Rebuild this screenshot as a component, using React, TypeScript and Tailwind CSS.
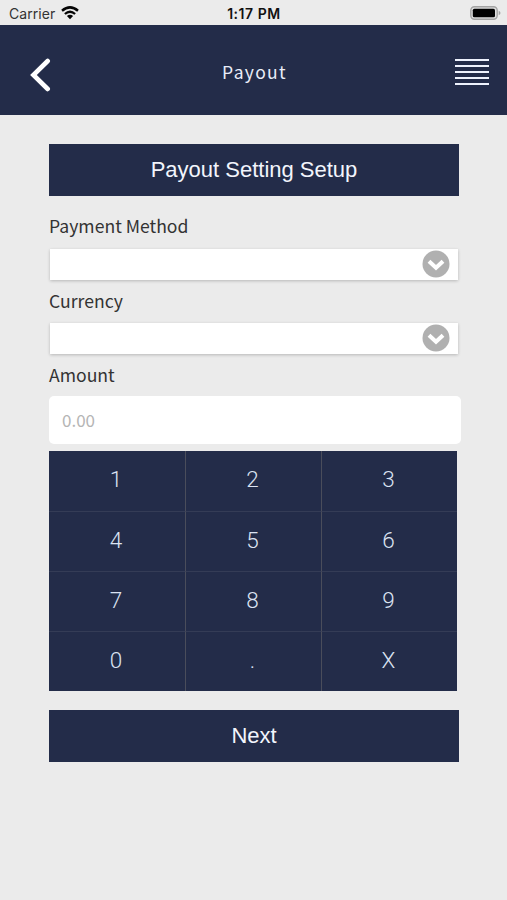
const CJK = "font-['Noto_Sans_CJK_SC','Noto_Sans',sans-serif]";
const KEYS = ["1", "2", "3", "4", "5", "6", "7", "8", "9", "0", ".", "X"];

function StatusBar() {
  return (
    <div className="grid h-[25px] grid-cols-3 items-center pl-[9px] pr-[6px] font-[Inter,sans-serif] text-[#111]">
      <div className="flex items-center gap-[6px] pt-[2px]">
        <span className="text-[14px] leading-[20px] tracking-[0.05px] text-[#333]">Carrier</span>
        <svg className="-mt-[2px]" width="18" height="14" viewBox="0 0 18 14" fill="none" stroke="#050505">
          <path d="M1 4.8 Q9 -2 17 4.8" strokeWidth="2.5" />
          <path d="M3.9 8 Q9 3.6 14.1 8" strokeWidth="2.3" />
          <path d="M5.9 10.1 Q9 7.5 12.1 10.1 L9 13.3 Z" fill="#050505" stroke="none" />
        </svg>
      </div>
      <div className="whitespace-nowrap pr-[2px] pt-[2px] text-center text-[14px] font-semibold leading-[20px] tracking-[0.55px]">1:17 PM</div>
      <div className="flex justify-end pt-[1px]">
        <svg width="31" height="14" viewBox="0 0 31 14">
          <rect x=".8" y=".8" width="26.4" height="12.4" rx="3.6" fill="#dedede" stroke="#a3a3a3" strokeWidth="1.4" />
          <rect x="2.8" y="2.7" width="22.2" height="8.6" rx="1.6" fill="#000" />
          <path d="M28.7 4.8 Q30.5 5.6 30.5 7 Q30.5 8.4 28.7 9.2Z" fill="#a3a3a3" />
        </svg>
      </div>
    </div>
  );
}

function Header() {
  return (
    <header className="flex h-[90px] items-center justify-between bg-[#232c49] pl-[30px] pr-[18px]">
      <button className="mt-[9px] w-[34px]" aria-label="Back">
        <svg width="22" height="34" viewBox="0 0 22 34" fill="none" stroke="#fff" strokeWidth="4.6" strokeLinecap="round" strokeLinejoin="miter">
          <path d="M17.7 3 L3.4 17 L17.7 31" />
        </svg>
      </button>
      <h1 className={`${CJK} mt-[3px] pr-[10px] text-[17.5px] leading-[26px] tracking-[1.3px] text-[#e9edf8]`}>Payout</h1>
      <button className="mt-[4px] flex w-[34px] flex-col gap-[4px]" aria-label="Menu">
        <span className="h-[2px] bg-[#eef2fd]" />
        <span className="h-[2px] bg-[#eef2fd]" />
        <span className="h-[2px] bg-[#eef2fd]" />
        <span className="h-[2px] bg-[#eef2fd]" />
        <span className="h-[2px] bg-[#eef2fd]" />
      </button>
    </header>
  );
}

function BigButton({ children }: { children: string }) {
  return (
    <button className="flex h-[52px] w-[410px] items-center justify-center bg-[#232c49] pb-[2px] font-['Liberation_Sans',sans-serif] text-[22px] text-[#f2f5fc]">
      {children}
    </button>
  );
}

function Label({ children }: { children: string }) {
  return <label className={`${CJK} block h-[26px] text-[17.6px] leading-[26px] text-[#333]`}>{children}</label>;
}

function Select() {
  return (
    <div className="ml-px flex h-[31px] w-[408px] items-center justify-end bg-white pr-[8px] shadow-[0_1px_3px_rgba(0,0,0,0.22)]">
      <svg className="-mt-px" width="28" height="28" viewBox="0 0 28 28">
        <circle cx="14" cy="14" r="13.5" fill="#b0b0b0" />
        <path d="M7 11.2 L14 17.8 L21 11.2" fill="none" stroke="#fff" strokeWidth="4" />
      </svg>
    </div>
  );
}

export default function App() {
  return (
    <div className="h-[900px] w-[507px] overflow-hidden bg-[#ebebeb]">
      <StatusBar />
      <Header />
      <main className="px-[49px] pt-[29px]">
        <BigButton>Payout Setting Setup</BigButton>
        <div className="mt-[17px]">
          <Label>Payment Method</Label>
        </div>
        <div className="mt-[10px]">
          <Select />
        </div>
        <div className="mt-[8px]">
          <Label>Currency</Label>
        </div>
        <div className="mt-[9px]">
          <Select />
        </div>
        <div className="mt-[8px]">
          <Label>Amount</Label>
        </div>
        <input
          className={`${CJK} mt-[8px] block h-[48px] w-[412px] rounded-[5px] bg-white px-[13px] pb-[2px] text-[17px] placeholder:text-[#b5b5b5]`}
          placeholder="0.00"
        />
        <div className="mt-[7px] grid h-[240px] w-[408px] grid-cols-3 grid-rows-4 bg-[#232c49]">
          {KEYS.map((key, i) => (
            <button
              key={key}
              className={`flex items-center justify-center border-t-[#343c56] border-l-[#4a4d5b] pb-[2px] pr-[2px] font-[Roboto,sans-serif] text-[22.5px] font-light text-[#dbe3f2] ${i % 3 > 0 ? "border-l" : ""} ${i > 2 ? "border-t" : ""}`}
            >
              {key}
            </button>
          ))}
        </div>
        <div className="mt-[19px]">
          <BigButton>Next</BigButton>
        </div>
      </main>
    </div>
  );
}
